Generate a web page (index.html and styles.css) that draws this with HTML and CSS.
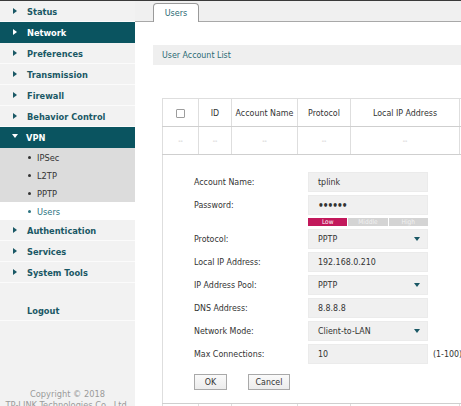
FILE: index.html
```html
<!DOCTYPE html>
<html>
<head>
<meta charset="utf-8">
<link rel="stylesheet" href="styles.css">
</head>
<body>
<div class="topline"></div>
<div class="page">
  <nav class="sidebar">
    <ul class="menu">
      <li class="item"><span class="arrow"></span>Status</li>
      <li class="item dark"><span class="arrow"></span>Network</li>
      <li class="item"><span class="arrow"></span>Preferences</li>
      <li class="item"><span class="arrow"></span>Transmission</li>
      <li class="item"><span class="arrow"></span>Firewall</li>
      <li class="item"><span class="arrow"></span>Behavior Control</li>
      <li class="item dark"><span class="arrow down"></span>VPN</li>
      <li class="sub">IPSec</li>
      <li class="sub">L2TP</li>
      <li class="sub">PPTP</li>
      <li class="sub current">Users</li>
      <li class="item"><span class="arrow"></span>Authentication</li>
      <li class="item"><span class="arrow"></span>Services</li>
      <li class="item"><span class="arrow"></span>System Tools</li>
    </ul>
    <div class="logout">Logout</div>
    <div class="copyright">Copyright © 2018<br>TP-LINK Technologies Co., Ltd.</div>
  </nav>
  <main class="main">
    <div class="tabbar"><div class="tab">Users</div></div>
    <div class="content">
      <div class="section-title">User Account List</div>
      <table class="grid">
        <colgroup>
          <col class="c1"><col class="c2"><col class="c3"><col class="c4"><col class="c5"><col class="c6">
        </colgroup>
        <tr class="head">
          <th><span class="checkbox"></span></th>
          <th>ID</th>
          <th>Account Name</th>
          <th>Protocol</th>
          <th>Local IP Address</th>
          <th></th>
        </tr>
        <tr class="empty">
          <td>--</td><td>--</td><td>--</td><td>--</td><td>--</td><td></td>
        </tr>
        <tr class="edit">
          <td colspan="6">
            <div class="form">
              <div class="frow"><span class="label">Account Name:</span><span class="field">tplink</span></div>
              <div class="frow"><span class="label">Password:</span><span class="field dots">••••••</span></div>
              <div class="strength"><span class="seg low">Low</span><span class="seg">Middle</span><span class="seg">High</span></div>
              <div class="frow"><span class="label">Protocol:</span><span class="field select">PPTP<span class="caret"></span></span></div>
              <div class="frow"><span class="label">Local IP Address:</span><span class="field">192.168.0.210</span></div>
              <div class="frow"><span class="label">IP Address Pool:</span><span class="field select">PPTP<span class="caret"></span></span></div>
              <div class="frow"><span class="label">DNS Address:</span><span class="field">8.8.8.8</span></div>
              <div class="frow"><span class="label">Network Mode:</span><span class="field select">Client-to-LAN<span class="caret"></span></span></div>
              <div class="frow"><span class="label">Max Connections:</span><span class="field">10</span><span class="hint">(1-100)</span></div>
              <div class="actions"><button class="btn ok">OK</button><button class="btn cancel">Cancel</button></div>
            </div>
          </td>
        </tr>
        <tr class="next">
          <td></td><td></td><td></td><td></td><td></td><td></td>
        </tr>
      </table>
    </div>
  </main>
</div>
</body>
</html>
```
FILE: styles.css
```css
html, body {
  margin: 0;
  padding: 0;
}
body {
  width: 461px;
  height: 406px;
  overflow: hidden;
  background: #fff;
  font-family: "DejaVu Sans Condensed", "DejaVu Sans", sans-serif;
  font-stretch: condensed;
  font-size: 8.8px;
  color: #333;
}
.topline {
  height: 1px;
  background: #3a3a3a;
}
.page {
  display: flex;
  height: 405px;
}
.sidebar {
  width: 135px;
  flex: none;
  background: #f2f2f2;
  display: flex;
  flex-direction: column;
}
.sidebar > * {
  flex: none;
}
.menu {
  list-style: none;
  margin: 0;
  padding: 0;
}
.item {
  height: 21px;
  box-sizing: border-box;
  border-bottom: 1px solid #fbfbfb;
  display: flex;
  align-items: center;
  padding-left: 13px;
  font-weight: bold;
  font-size: 9.2px;
  color: #1a5865;
}
.arrow {
  width: 0;
  height: 0;
  border-left: 4px solid #1a5865;
  border-top: 3px solid transparent;
  border-bottom: 3px solid transparent;
  margin-right: 10px;
}
.item.dark {
  background: #0a5460;
  border-bottom-color: #0a5460;
  color: #fff;
}
.item.dark .arrow {
  border-left-color: #fff;
}
.item.dark .arrow.down {
  border-left: 3px solid transparent;
  border-right: 3px solid transparent;
  border-top: 4px solid #fff;
  border-bottom: 0;
  margin-left: -1px;
  margin-right: 8px;
  margin-top: -3px;
}
.sub {
  height: 18px;
  display: flex;
  align-items: center;
  padding-left: 28px;
  background: #dcdcdc;
  font-size: 9.2px;
  color: #333;
}
.sub::before {
  content: "";
  width: 3px;
  height: 3px;
  border-radius: 50%;
  background: #333;
  margin-right: 6px;
}
.sub.current {
  background: #fff;
  color: #2b7380;
}
.sub.current::before {
  background: #2b7380;
}
.logout {
  margin-top: 17px;
  height: 21px;
  box-sizing: border-box;
  border-bottom: 1px solid #fbfbfb;
  display: flex;
  align-items: center;
  padding-left: 27px;
  font-weight: bold;
  font-size: 9.2px;
  color: #1a5865;
}
.copyright {
  margin-top: 67px;
  text-align: center;
  color: #9a9a9a;
  font-size: 9.2px;
  line-height: 11px;
  white-space: nowrap;
}
.main {
  flex: 1;
  min-width: 0;
  overflow: hidden;
}
.tabbar {
  height: 21px;
  box-sizing: border-box;
  background: #f0f0f0;
  border-bottom: 1px solid #a8a8a8;
  padding-left: 18px;
  display: flex;
  align-items: flex-end;
}
.tab {
  width: 46px;
  height: 19px;
  box-sizing: border-box;
  border: 1px solid #9a9a9a;
  border-bottom: none;
  border-radius: 4px 4px 0 0;
  background: #fff;
  margin-bottom: -1px;
  display: flex;
  align-items: center;
  justify-content: center;
  color: #2b6a74;
  font-size: 9px;
}
.content {
  padding-left: 18px;
  padding-top: 23px;
}
.section-title {
  height: 20px;
  background: #efefef;
  padding-left: 9px;
  display: flex;
  align-items: center;
  color: #2b6a74;
  font-size: 8.8px;
}
.grid {
  margin-top: 33px;
  margin-left: 9px;
  border-collapse: collapse;
  table-layout: fixed;
  width: 377px;
}
.c1 { width: 36px; }
.c2 { width: 33px; }
.c3 { width: 66px; }
.c4 { width: 53px; }
.c5 { width: 109px; }
.c6 { width: 80px; }
.grid th,
.grid td {
  border: 1px solid #dedede;
  padding: 0;
  text-align: center;
  font-weight: normal;
}
.head th {
  height: 27px;
  color: #333;
  border-bottom-color: #cfcfcf;
}
.checkbox {
  display: inline-block;
  width: 7px;
  height: 7px;
  border: 1px solid #9d9d9d;
  border-radius: 1px;
  vertical-align: middle;
}
.empty td {
  height: 27px;
  color: #b5b5b5;
  font-size: 7px;
  border-bottom-color: #cfcfcf;
}
.edit td {
  text-align: left;
  padding: 17px 0 13px 31px;
  border-bottom-color: #cfcfcf;
}
.next td {
  height: 10px;
}
.form {
  display: flex;
  flex-direction: column;
  gap: 3px;
}
.frow {
  display: flex;
  align-items: center;
  height: 20px;
}
.label {
  width: 114px;
  flex: none;
}
.field {
  width: 120px;
  height: 20px;
  flex: none;
  box-sizing: border-box;
  background: #f0f0f0;
  border: 1px solid #ebebeb;
  padding: 0 7px 0 9px;
  display: flex;
  align-items: center;
  justify-content: space-between;
  color: #333;
}
.dots {
  font-size: 10px;
  font-weight: bold;
  letter-spacing: -1px;
}
.caret {
  width: 0;
  height: 0;
  border-left: 3px solid transparent;
  border-right: 3px solid transparent;
  border-top: 4px solid #1a5865;
}
.hint {
  margin-left: 5px;
  white-space: nowrap;
}
.strength {
  display: flex;
  gap: 1px;
  margin-left: 114px;
  width: 120px;
  height: 8px;
}
.seg {
  flex: 1;
  background: #d4d4d4;
  color: #f2f2f2;
  font-size: 6.5px;
  line-height: 8px;
  text-align: center;
}
.seg.low {
  background: #c2185b;
  color: #fff;
}
.actions {
  display: flex;
  gap: 21px;
  margin-top: 7px;
}
.btn {
  height: 16px;
  box-sizing: border-box;
  border: 1px solid #a9a9a9;
  background: linear-gradient(#fafafa, #ececec);
  font: inherit;
  color: #333;
  padding: 0;
  border-radius: 0;
}
.btn.ok { width: 33px; }
.btn.cancel { width: 42px; }
```
